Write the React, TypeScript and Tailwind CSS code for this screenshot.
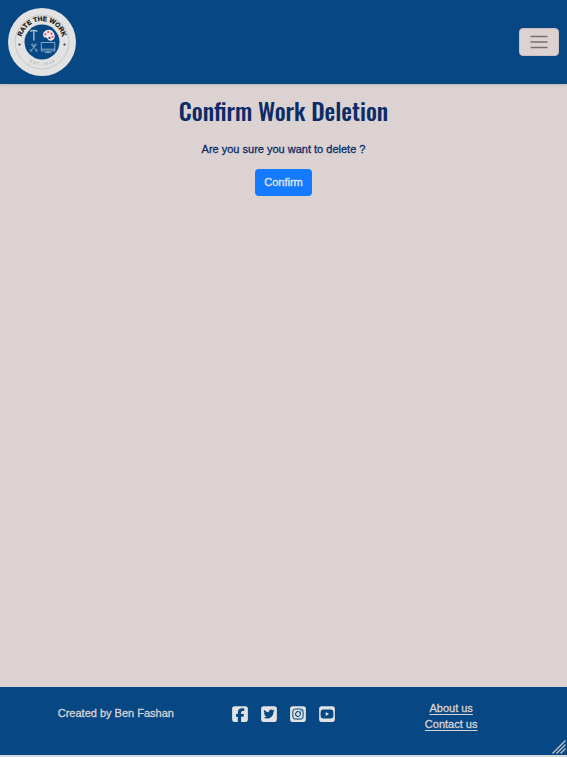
import {
  FaSquareFacebook,
  FaSquareInstagram,
  FaSquareTwitter,
  FaSquareYoutube,
} from "react-icons/fa6";

function Logo() {
  return (
    <svg viewBox="0 0 68 68" className="size-[68px]" role="img" aria-label="Rate the Work">
      <circle cx="34" cy="34" r="34" fill="#e2e2e2" />
      <circle cx="34" cy="34" r="26.9" fill="none" stroke="#b2b5b9" strokeWidth="0.6" />
      <circle cx="34" cy="34" r="17.5" fill="#074884" />
      <defs>
        <path id="upper-arc" d="M13 34A21 21 0 0 1 55 34" />
        <path id="lower-arc" d="M10.5 34A23.5 23.5 0 0 0 57.5 34" />
      </defs>
      <text fontFamily="Liberation Sans, sans-serif" fontWeight="700" fontSize="6.6" fill="#111" stroke="#111" strokeWidth="0.2">
        <textPath href="#upper-arc" startOffset="50%" textAnchor="middle">RATE THE WORK</textPath>
      </text>
      <text fontFamily="Liberation Sans, sans-serif" fontSize="4" fill="#999da3" xmlSpace="preserve">
        <textPath href="#lower-arc" startOffset="50%" textAnchor="middle">E S T .  2 0 2 0</textPath>
      </text>
      <circle cx="11.5" cy="36.5" r="1.1" fill="#26354a" />
      <circle cx="56.5" cy="36.5" r="1.1" fill="#26354a" />
      <path d="M22 23.4Q25.8 21.4 29.5 23.4M25.9 22.8V32.5" fill="none" stroke="#b5c6d8" strokeWidth="1.3" />
      <path
        d="M40.5 21.8C36.5 22 34.2 25.5 35.4 28.2C36.2 30.2 38.3 28.9 39.2 30.3C40.2 32 40.8 33 43.2 32.7C47 32 47.5 28 45.8 25C44.6 22.8 42.8 21.7 40.5 21.8Z"
        fill="#f4e4e8"
      />
      <g fill="#e25561">
        <circle cx="37.4" cy="26.4" r="1.1" />
        <circle cx="40.2" cy="24" r="1.1" />
        <circle cx="43.5" cy="25.7" r="1.1" />
        <circle cx="44.5" cy="29" r="1.1" />
      </g>
      <circle cx="41.5" cy="29.9" r="1.1" fill="#254b91" />
      <path d="M23 36L28.5 42.5M28.8 36L23 42.5M24.4 35.5L26 39L27.5 35.5" fill="none" stroke="#9db4ca" strokeWidth="0.8" />
      <circle cx="23" cy="42.5" r="1" fill="none" stroke="#9db4ca" strokeWidth="0.6" />
      <circle cx="28.5" cy="42.5" r="1" fill="none" stroke="#9db4ca" strokeWidth="0.6" />
      <path d="M33.3 34.5H46.8V43H33.3ZM33.3 41.2H46.8M40 43V44.5M37 44.6H43" fill="none" stroke="#a9bfd4" strokeWidth="0.8" />
    </svg>
  );
}

const socials = [
  { label: "Facebook", Icon: FaSquareFacebook },
  { label: "Twitter", Icon: FaSquareTwitter },
  { label: "Instagram", Icon: FaSquareInstagram },
  { label: "YouTube", Icon: FaSquareYoutube },
];

export default function App() {
  return (
    <div className="flex min-h-screen flex-col border-b-2 border-[#d8dade] bg-[#dcd2d1] font-['Liberation_Sans',Arial,sans-serif] text-[11px] leading-4 text-[#0b2c66] [-webkit-text-stroke:0.3px]">
      <header className="flex items-center justify-between bg-[#074884] p-2 shadow-sm">
        <a href="#home" className="[-webkit-text-stroke:0]"><Logo /></a>
        <button
          type="button"
          aria-label="Toggle navigation"
          className="flex h-7 w-10 items-center justify-center rounded border border-[#cbbfc2] bg-[#dcd2d1]"
        >
          <svg viewBox="0 0 18 14" className="h-[14px] w-[18px]" aria-hidden="true">
            <path d="M0.5 1.5H17.5M0.5 7H17.5M0.5 12.5H17.5" stroke="#737170" strokeWidth="1.4" />
          </svg>
        </button>
      </header>

      <main className="flex flex-1 flex-col items-center pt-[10px]">
        <h1 className="font-['Oswald','Liberation_Sans_Narrow',sans-serif] text-2xl leading-8 font-medium [-webkit-text-stroke:0]">
          Confirm Work Deletion
        </h1>
        <p className="mt-[15px]">Are you sure you want to delete ?</p>
        <button type="button" className="mt-3 rounded bg-[#147aff] px-[9px] pt-[5px] pb-[6px] text-[#e6e6ec]">
          Confirm
        </button>
      </main>

      <footer className="relative bg-[#074884] px-8 pt-[13px] pb-[23px] text-[#d9d3d4]">
        <div className="grid grid-cols-3 items-start text-center">
          <p className="pt-[5px]">Created by Ben Fashan</p>
          <div className="flex justify-center gap-[11px] pt-[5px]">
            {socials.map(({ label, Icon }) => (
              <a key={label} href="#social" aria-label={label} className="text-[#e2e2e2]">
                <Icon size={18} />
              </a>
            ))}
          </div>
          <nav className="flex flex-col items-center">
            <a href="#about" className="underline underline-offset-2">About us</a>
            <a href="#contact" className="underline underline-offset-2">Contact us</a>
          </nav>
        </div>
        <svg viewBox="0 0 14 14" className="absolute right-px bottom-px size-[14px]" aria-hidden="true">
          <path d="M0.5 13.5L13.5 0.5M4.5 13.5L13.5 4.5M8.5 13.5L13.5 8.5" stroke="#c5c3c5" strokeWidth="1.4" />
        </svg>
      </footer>
    </div>
  );
}
